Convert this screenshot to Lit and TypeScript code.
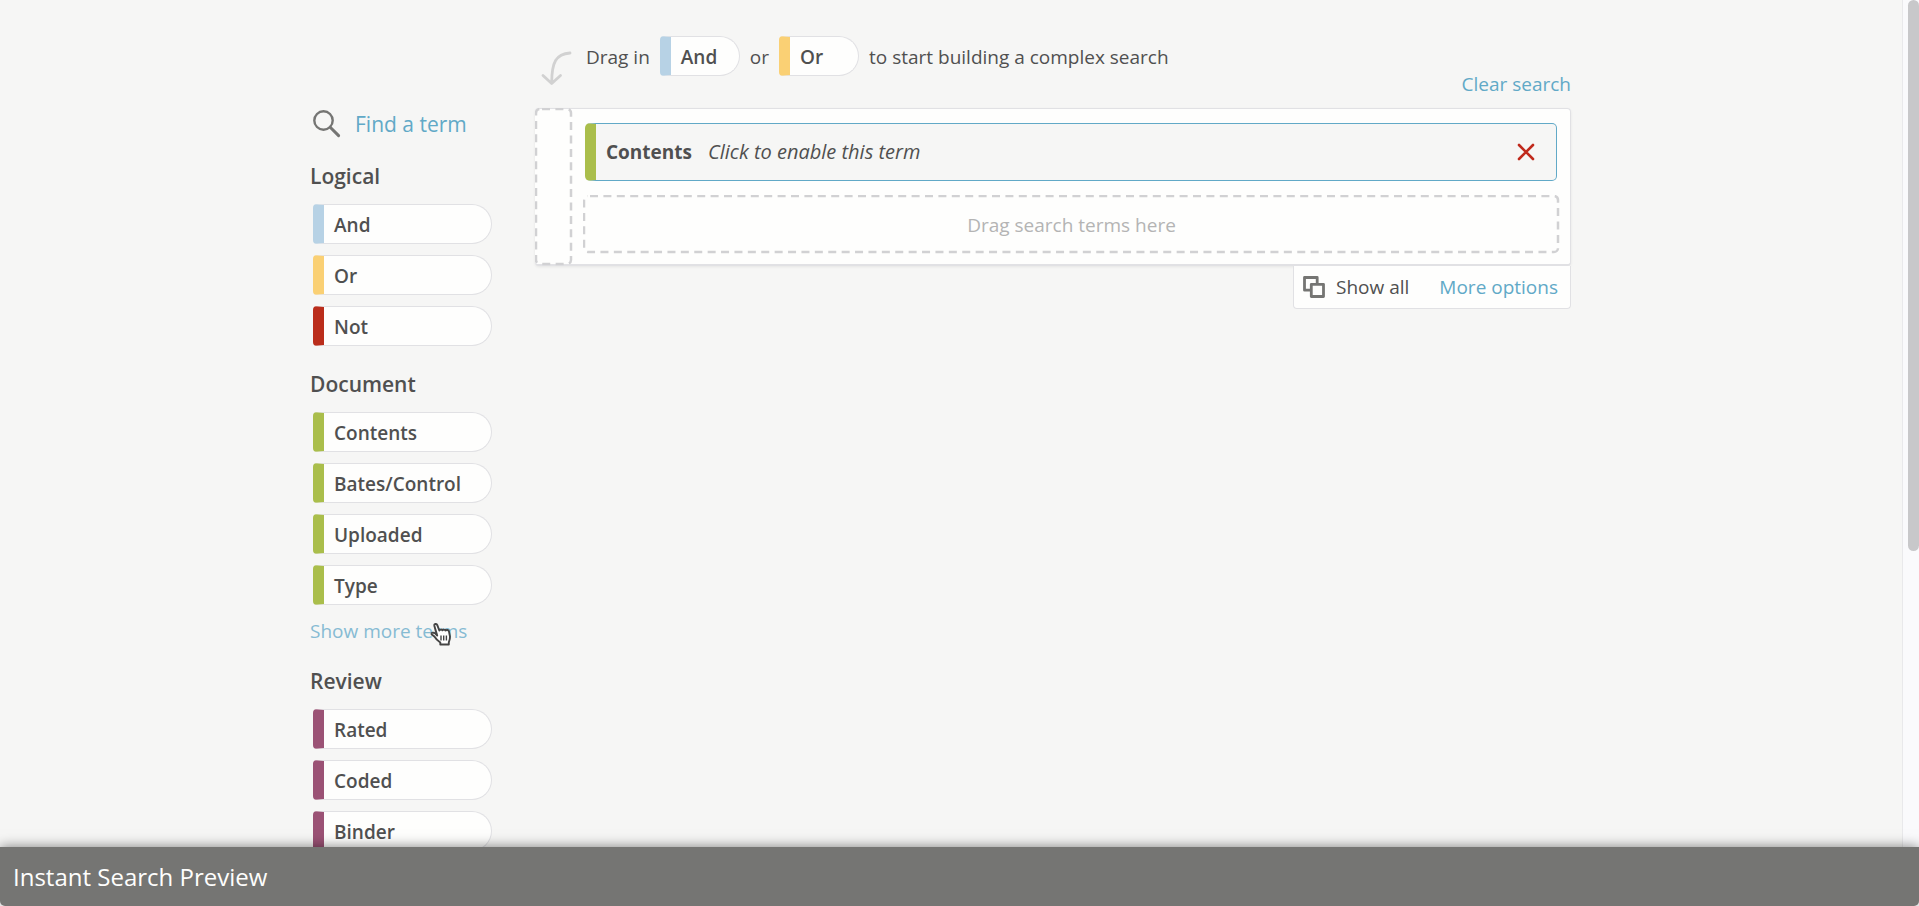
import { LitElement, html, css, svg, nothing } from "lit";
import { customElement, property } from "lit/decorators.js";

interface TermGroup {
  title: string;
  tone: string[];
  terms: string[];
  more?: boolean;
}

const GROUPS: TermGroup[] = [
  { title: "Logical", tone: ["blue", "yellow", "red"], terms: ["And", "Or", "Not"] },
  {
    title: "Document",
    tone: ["green"],
    terms: ["Contents", "Bates/Control", "Uploaded", "Type"],
    more: true,
  },
  { title: "Review", tone: ["plum"], terms: ["Rated", "Coded", "Binder"] },
];

const shared = css`
  * {
    box-sizing: border-box;
  }
  button {
    font: inherit;
    color: inherit;
    margin: 0;
    padding: 0;
    border: 0;
    background: none;
    text-align: left;
    cursor: pointer;
  }
  a {
    color: #61a9c7;
    text-decoration: none;
  }
  svg {
    display: block;
  }
`;

@customElement("term-chip")
export class TermChip extends LitElement {
  @property() label = "";
  @property() tone = "green";

  static styles = [
    shared,
    css`
      :host {
        display: block;
      }
      .chip {
        display: flex;
        align-items: center;
        width: 100%;
        height: 40px;
        padding: 2px 0 0 10px;
        border: 1px solid #e1e1e4;
        border-left: 11px solid var(--tone);
        border-radius: 4px 20px 20px 4px;
        background: #fefefd;
        font-weight: 600;
        white-space: nowrap;
      }
      .blue {
        --tone: #b7d2e5;
      }
      .yellow {
        --tone: #fad074;
      }
      .red {
        --tone: #ba2d1b;
      }
      .green {
        --tone: #aabe4b;
      }
      .plum {
        --tone: #9b5275;
      }
    `,
  ];

  render() {
    return html`<button class="chip ${this.tone}" type="button" draggable="true">${this.label}</button>`;
  }
}

@customElement("dashed-frame")
export class DashedFrame extends LitElement {
  static styles = [
    shared,
    css`
      :host {
        display: grid;
      }
      .frame,
      .content {
        grid-area: 1 / 1;
      }
      .frame {
        width: 100%;
        height: 100%;
      }
      .outline {
        x: 1px;
        y: 1px;
        width: calc(100% - 3px);
        height: calc(100% - 3px);
        fill: none;
        stroke: #d1d1d3;
        stroke-width: 2.5;
        stroke-dasharray: 8 5.4;
        stroke-dashoffset: -2;
      }
      .content {
        display: grid;
        place-items: center;
      }
    `,
  ];

  render() {
    return html`
      <svg class="frame" aria-hidden="true"><rect class="outline" rx="4"></rect></svg>
      <div class="content"><slot></slot></div>
    `;
  }
}

@customElement("app-root")
export class AppRoot extends LitElement {
  static styles = [
    shared,
    css`
      :host {
        display: grid;
        grid-template-rows: minmax(0, 1fr) auto;
        height: 100vh;
        overflow: hidden;
        background: #f6f6f5;
        color: #505050;
        font-family: "Open Sans", "Noto Sans", sans-serif;
        font-size: 19px;
        line-height: 26px;
      }
      .viewport {
        display: grid;
        grid-template-columns: minmax(0, 1fr) 17px;
        min-height: 0;
      }
      .scroller {
        overflow: hidden;
      }
      .page {
        display: grid;
        grid-template-columns: 179px minmax(0, 1fr);
        column-gap: 43px;
        align-items: start;
        max-width: 1280px;
        margin: 0 auto;
        padding: 0 20px 0 2px;
      }
      .sidebar {
        padding-top: 108px;
      }
      .find {
        display: flex;
        align-items: center;
        gap: 14px;
        height: 32px;
        font-size: 21px;
      }
      .group-title {
        margin: 0 0 0 -3px;
        padding: 20px 0 12px;
        font-size: 21px;
        line-height: 32px;
        font-weight: 600;
      }
      .group-list {
        display: grid;
        gap: 11px;
        margin: 0;
        padding: 0;
        list-style: none;
      }
      .group + .group {
        padding-top: 2px;
      }
      .more {
        display: flex;
        align-items: flex-start;
        position: relative;
        height: 38px;
        margin-left: -3px;
        padding: 13px 0 0;
      }
      .more a {
        color: #86bbd3;
      }
      .cursor {
        position: absolute;
        left: 120px;
        top: 17px;
      }
      .hint {
        display: flex;
        align-items: center;
        padding: 36px 0 0 7px;
        height: 76px;
      }
      .hint-text {
        padding-top: 2px;
      }
      .hint-arrow {
        flex: none;
        align-self: flex-start;
        margin: 14px 16px 0 0;
        overflow: visible;
      }
      .hint term-chip {
        width: 80px;
        margin: 0 10px;
      }
      .clear {
        display: flex;
        justify-content: flex-end;
        height: 32px;
        padding-bottom: 11px;
        align-items: flex-end;
      }
      .builder {
        display: grid;
        grid-template-columns: 38px minmax(0, 1fr);
        border: solid #e1e1e4;
        border-width: 1px 1px 2px 0;
        border-radius: 4px;
        background: #fefefd;
        box-shadow: 0 1px 3px rgba(0, 0, 0, 0.07);
      }
      .gutter {
        margin: -1px 0 -2px;
      }
      .rows {
        display: grid;
        gap: 14px;
        padding: 14px 10px 10px;
      }
      .term {
        display: flex;
        align-items: center;
        height: 58px;
        margin: 0 3px 0 2px;
        padding: 0 20px 0 10px;
        border: 1px solid #61a9c7;
        border-left: 11px solid #aabe4b;
        border-radius: 5px;
        background: #f6f6f5;
      }
      .term-name {
        font-weight: 700;
      }
      .term-hint {
        flex: 1;
        margin-left: 16px;
        font-style: italic;
        font-size: 20px;
      }
      .drop {
        height: 59px;
        color: #b4b4b4;
      }
      .options {
        display: flex;
        align-items: center;
        width: max-content;
        height: 43px;
        margin-left: auto;
        padding: 0 12px 0 9px;
        border: solid #e1e1e4;
        border-width: 0 1px 1px;
        border-radius: 0 0 4px 4px;
        background: #fefefd;
      }
      .show-all {
        display: flex;
        align-items: center;
        gap: 11px;
        margin-right: 30px;
      }
      .track {
        padding-left: 5px;
        border-left: 1px solid #e9e9eb;
        background: #fafafc;
      }
      .thumb {
        width: 11px;
        height: 65%;
        border-radius: 6px;
        background: #c8c8ca;
      }
      .preview {
        position: relative;
        background: #e4e4e4;
        box-shadow: 0 0 12px rgba(0, 0, 0, 0.5);
      }
      .preview-button {
        display: block;
        width: 100%;
        height: 59px;
        padding: 0 13px;
        border-radius: 0 0 5px 5px;
        background: #757573;
        color: #fefefd;
        font-size: 24px;
      }
    `,
  ];

  private toneOf(group: TermGroup, i: number) {
    return group.tone[i] ?? group.tone[0];
  }

  private searchIcon() {
    return svg`<svg width="28" height="28" viewBox="0 0 28 28" fill="none" stroke="#757573" aria-hidden="true">
      <circle cx="10.5" cy="10.5" r="9.2" stroke-width="2.4"/>
      <path d="M17.2 17.2 25.600 25.600" stroke-width="3" stroke-linecap="round"/>
    </svg>`;
  }

  private pointer() {
    return svg`<svg class="cursor" width="22" height="24" viewBox="0 0 22 24" aria-hidden="true">
      <path d="M7.2 13.5 4.4 3.9C3.9 1.9 6.600 1.100 7.300 3.100L9.300 8.500C10.100 7.300 11.900 7.300 12.400 8.300 13.400 7.300 15 7.500 15.500 8.500 16.700 7.500 18.500 7.900 19 9.600L20 14.500C20.200 17 19.600 18.500 18.800 20.300V22.500H10.300V20.500C7.800 18.800 5.900 17 4.800 15 3.800 13.400 1.800 13.300 1.500 12 1.300 10.700 3.500 10.300 4.900 11.200Z" fill="#fff" stroke="#444" stroke-width="1.900" stroke-linejoin="round"/>
      <path d="M11 13.500v5M13.700 13.500v5M16.400 13.500v5" stroke="#444" stroke-width="1.400"/>
    </svg>`;
  }

  render() {
    return html`
      <div class="viewport">
        <div class="scroller">
          <div class="page">
            <nav class="sidebar" aria-label="Search terms">
              <div class="find">${this.searchIcon()}<a href="#find">Find a term</a></div>
              ${GROUPS.map(
                (group) => html`
                  <section class="group">
                    <h2 class="group-title">${group.title}</h2>
                    <ul class="group-list">
                      ${group.terms.map(
                        (term, i) => html`<li><term-chip label=${term} tone=${this.toneOf(group, i)}></term-chip></li>`
                      )}
                    </ul>
                    ${group.more
                      ? html`<div class="more"><a href="#more">Show more terms</a>${this.pointer()}</div>`
                      : nothing}
                  </section>
                `
              )}
            </nav>
            <main>
              <div class="hint">
                <svg class="hint-arrow" width="28" height="36" viewBox="0 0 28 36" fill="none" stroke="#d1d1d1" stroke-width="2.800" stroke-linecap="round" stroke-linejoin="round" aria-hidden="true">
                  <path d="M28 3C14 4 9.700 12 9.700 33M1 25.500 9.700 33.500 18.500 25.500"/>
                </svg>
                <span class="hint-text">Drag in</span>
                <term-chip label="And" tone="blue"></term-chip>
                <span class="hint-text">or</span>
                <term-chip label="Or" tone="yellow"></term-chip>
                <span class="hint-text">to start building a complex search</span>
              </div>
              <div class="clear"><a href="#clear">Clear search</a></div>
              <div class="builder">
                <dashed-frame class="gutter"></dashed-frame>
                <div class="rows">
                  <div class="term">
                    <span class="term-name">Contents</span>
                    <span class="term-hint">Click to enable this term</span>
                    <button type="button" aria-label="Remove term">
                      <svg width="20" height="20" viewBox="0 0 20 20" fill="none" stroke="#c02a1c" stroke-width="2.600" stroke-linecap="round" aria-hidden="true">
                        <path d="m3 3 14 14M17 3 3 17"/>
                      </svg>
                    </button>
                  </div>
                  <dashed-frame class="drop">Drag search terms here</dashed-frame>
                </div>
              </div>
              <div class="options">
                <button class="show-all" type="button">
                  <svg width="22" height="22" viewBox="0 0 22 22" fill="none" stroke="#757573" stroke-width="2.800" stroke-linejoin="round" aria-hidden="true">
                    <path d="M7.500 14.200H1.500V1.500H14.200V7.500"/>
                    <path d="M8.300 8.300H20.500V20.500H8.300Z"/>
                  </svg>
                  Show all
                </button>
                <a href="#options">More options</a>
              </div>
            </main>
          </div>
        </div>
        <div class="track"><div class="thumb"></div></div>
      </div>
      <footer class="preview">
        <button class="preview-button" type="button">Instant Search Preview</button>
      </footer>
    `;
  }
}
